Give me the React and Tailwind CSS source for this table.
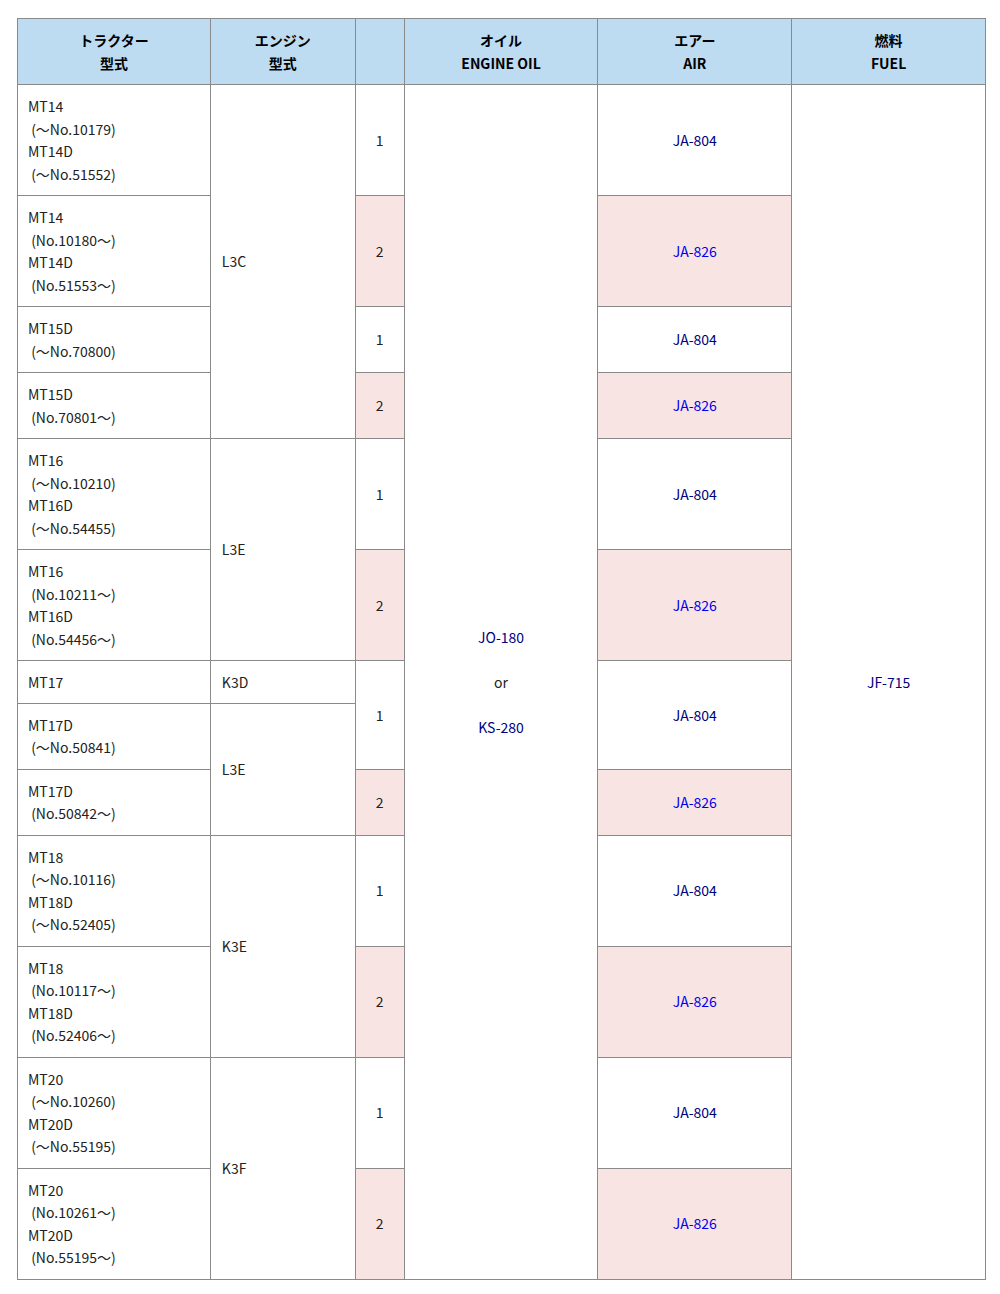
const rows = [
  { model: ["MT14", "(〜No.10179)", "MT14D", "(〜No.51552)"], engine: { name: "L3C", span: 4 }, num: { n: 1, span: 1 } },
  { model: ["MT14", "(No.10180〜)", "MT14D", "(No.51553〜)"], num: { n: 2, span: 1 } },
  { model: ["MT15D", "(〜No.70800)"], num: { n: 1, span: 1 } },
  { model: ["MT15D", "(No.70801〜)"], num: { n: 2, span: 1 } },
  { model: ["MT16", "(〜No.10210)", "MT16D", "(〜No.54455)"], engine: { name: "L3E", span: 2 }, num: { n: 1, span: 1 } },
  { model: ["MT16", "(No.10211〜)", "MT16D", "(No.54456〜)"], num: { n: 2, span: 1 } },
  { model: ["MT17"], engine: { name: "K3D", span: 1 }, num: { n: 1, span: 2 }, tight: true },
  { model: ["MT17D", "(〜No.50841)"], engine: { name: "L3E", span: 2 } },
  { model: ["MT17D", "(No.50842〜)"], num: { n: 2, span: 1 } },
  { model: ["MT18", "(〜No.10116)", "MT18D", "(〜No.52405)"], engine: { name: "K3E", span: 2 }, num: { n: 1, span: 1 } },
  { model: ["MT18", "(No.10117〜)", "MT18D", "(No.52406〜)"], num: { n: 2, span: 1 } },
  { model: ["MT20", "(〜No.10260)", "MT20D", "(〜No.55195)"], engine: { name: "K3F", span: 2 }, num: { n: 1, span: 1 } },
  { model: ["MT20", "(No.10261〜)", "MT20D", "(No.55195〜)"], num: { n: 2, span: 1 } },
];

const cell = "border border-[#8a8a8a] px-[10px] py-[10px] align-middle";
const tightCell = "border border-[#8a8a8a] px-[10px] py-[9.5px] align-middle";

function Lines({ lines }) {
  return lines.map((l, i) => (
    <span key={i}>
      {l.startsWith("(") ? "\u00a0" + l : l}
      {i < lines.length - 1 && <br />}
    </span>
  ));
}

export default function App() {
  return (
    <div className="bg-white pt-[18px] pl-[17px] pb-[15px]" style={{ fontFamily: '"Noto Sans CJK JP", "Noto Sans", sans-serif' }}>
      <table className="w-[969px] border-collapse text-[14px] leading-[22.5px] text-[#222]">
        <colgroup>
          <col className="w-[193px]" />
          <col className="w-[145px]" />
          <col className="w-[49px]" />
          <col className="w-[194px]" />
          <col className="w-[194px]" />
          <col className="w-[194px]" />
        </colgroup>
        <thead>
          <tr className="bg-[#bddbf1] font-bold text-black text-center">
            <th className={cell}>トラクター<br />型式</th>
            <th className={cell}>エンジン<br />型式</th>
            <th className={cell}></th>
            <th className={cell}>オイル<br />ENGINE OIL</th>
            <th className={cell}>エアー<br />AIR</th>
            <th className={cell}>燃料<br />FUEL</th>
          </tr>
        </thead>
        <tbody>
          {rows.map((r, i) => {
            const c = r.tight ? tightCell : cell;
            return (
              <tr key={i}>
                <td className={c}>
                  <Lines lines={r.model} />
                </td>
                {r.engine && (
                  <td className={`${c} pl-[11px]`} rowSpan={r.engine.span}>{r.engine.name}</td>
                )}
                {r.num && (
                  <td className={`${cell} text-center ${r.num.n === 2 ? "bg-[#f8e4e3]" : ""}`} rowSpan={r.num.span}>
                    {r.num.n}
                  </td>
                )}
                {i === 0 && (
                  <td className={`${cell} text-center text-[#000080]`} rowSpan={rows.length}>
                    JO-180<br /><br /><span className="text-[#222]">or</span><br /><br />KS-280
                  </td>
                )}
                {r.num && (
                  <td
                    className={`${cell} text-center ${r.num.n === 2 ? "bg-[#f8e4e3] text-[#0000ee]" : "text-[#000080]"}`}
                    rowSpan={r.num.span}
                  >
                    {r.num.n === 2 ? "JA-826" : "JA-804"}
                  </td>
                )}
                {i === 0 && (
                  <td className={`${cell} text-center text-[#000080]`} rowSpan={rows.length}>
                    JF-715
                  </td>
                )}
              </tr>
            );
          })}
        </tbody>
      </table>
    </div>
  );
}
